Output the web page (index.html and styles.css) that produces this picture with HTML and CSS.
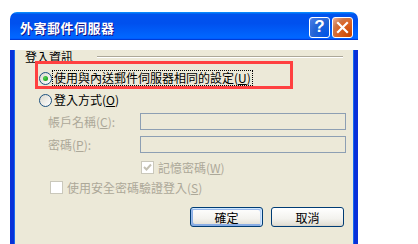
FILE: index.html
```html
<!DOCTYPE html>
<html lang="zh-Hant">
  <head>
    <meta charset="UTF-8" />
    <title>外寄郵件伺服器</title>
    <link rel="stylesheet" href="styles.css">
  </head>
  <body>
    <div class="window">
      <div class="titlebar">
        <span class="title">外寄郵件伺服器</span>
        <div class="controls">
          <span class="ctl help">?</span>
          <span class="ctl close">
            <svg width="13" height="13" viewBox="0 0 13 13">
              <path d="M2 2 L11 11 M11 2 L2 11" stroke="#fff" stroke-width="2.2" stroke-linecap="square" />
            </svg>
          </span>
        </div>
      </div>
      <div class="client">
        <div class="group-head">
          <span class="group-label">登入資訊</span>
          <span class="rule"></span>
        </div>
        <div class="row highlight">
          <span class="radio checked"></span>
          <span class="option focused">使用與內送郵件伺服器相同的設定(<u>U</u>)</span>
        </div>
        <div class="row second">
          <span class="radio"></span>
          <span class="option">登入方式(<u>O</u>)</span>
        </div>
        <div class="field first">
          <span class="field-label">帳戶名稱(<u>C</u>):</span>
          <span class="input"></span>
        </div>
        <div class="field">
          <span class="field-label">密碼(<u>P</u>):</span>
          <span class="input"></span>
        </div>
        <div class="check remember">
          <span class="box checked">
            <svg width="9" height="9" viewBox="0 0 9 9">
              <path d="M1 4 L3.5 6.5 L8 1.5" fill="none" stroke="#c4c1b3" stroke-width="2" />
            </svg>
          </span>
          <span class="dim">記憶密碼(<u>W</u>)</span>
        </div>
        <div class="check secure">
          <span class="box"></span>
          <span class="dim">使用安全密碼驗證登入(<u>S</u>)</span>
        </div>
        <div class="buttons">
          <button class="btn default">確定</button>
          <button class="btn">取消</button>
        </div>
      </div>
    </div>
  </body>
</html>
```

FILE: styles.css
```css
body {
  margin: 0;
  height: 244px;
  overflow: hidden;
  background-color: #fff;
  font-family: "Noto Sans CJK TC", "Liberation Sans", sans-serif;
  font-size: 12px;
  color: #000;
}
.window {
  width: 348px;
  margin: 12px 0 0 10px;
}
.titlebar {
  height: 28px;
  box-sizing: border-box;
  padding: 2px 5px 0 10px;
  display: flex;
  align-items: center;
  justify-content: space-between;
  border-radius: 7px 7px 0 0;
  background: linear-gradient(to bottom, #0997ff 0%, #0053ee 8%, #0050ee 40%, #0066ff 88%, #0066ff 93%, #005bff 95%, #003dd7 96%, #003dd7 100%);
}
.title {
  color: #fff;
  font-weight: bold;
  font-size: 13px;
  text-shadow: 1px 1px #0f1089;
  letter-spacing: 0.5px;
}
.controls {
  display: flex;
  gap: 2px;
}
.ctl {
  width: 21px;
  height: 21px;
  box-sizing: border-box;
  border: 1px solid #fff;
  border-radius: 3px;
  display: flex;
  align-items: center;
  justify-content: center;
  color: #fff;
}
.help {
  background: radial-gradient(circle at 90% 90%, #0054e9 0%, #2263d5 55%, #4479e4 90%, #a5c0f5 100%);
  font-family: "Liberation Sans", sans-serif;
  font-weight: bold;
  font-size: 17px;
}
.close {
  background: radial-gradient(circle at 90% 90%, #cc4600 0%, #dc6527 55%, #cd7546 70%, #f4b39a 100%);
}
.client {
  height: 195px;
  border: 4px solid #0831d9;
  border-top: 0;
  border-bottom-width: 5px;
  background-color: #ece9d8;
  box-shadow: inset 1px 0 #166aee, inset -1px 0 #166aee, inset 0 -1px #166aee;
}
.group-head {
  margin-top: 10px;
  height: 14px;
  padding: 0 11px;
  display: flex;
  align-items: center;
}
.group-label {
  line-height: 14px;
}
.rule {
  flex: 1;
  margin-left: 24px;
  height: 0;
  border-top: 1px solid #aca899;
  border-bottom: 1px solid #fff;
}
.row {
  display: flex;
  align-items: center;
}
.highlight {
  width: 252px;
  height: 22px;
  box-sizing: border-box;
  margin-left: 24px;
  padding: 6px 0 0 1px;
  outline: 3px solid #ff4040;
}
.second {
  height: 16px;
  margin: 6px 0 0 25px;
}
.radio {
  width: 13px;
  height: 13px;
  box-sizing: border-box;
  border: 1px solid #1c5180;
  border-radius: 50%;
  background: linear-gradient(135deg, #dcd9cf, #fff);
  position: relative;
}
.radio.checked::after {
  content: "";
  position: absolute;
  left: 3px;
  top: 3px;
  width: 5px;
  height: 5px;
  border-radius: 50%;
  background: radial-gradient(circle at 35% 35%, #55d551, #21a121 70%, #1a8a1a);
}
.option {
  margin-left: 1px;
  line-height: 14px;
  padding: 0 1px;
}
.focused {
  outline: 1px dotted #000;
}
.field {
  height: 17px;
  margin: 6px 0 0 34px;
  display: flex;
  align-items: center;
}
.field.first {
  margin-top: 5px;
}
.field-label {
  width: 92px;
  color: #aca899;
}
.input {
  width: 206px;
  height: 17px;
  box-sizing: border-box;
  border: 1px solid #8d9fb3;
  background-color: #ece9d8;
}
.check {
  height: 13px;
  display: flex;
  align-items: center;
  gap: 4px;
}
.remember {
  margin: 8px 0 0 127px;
}
.secure {
  margin: 7px 0 0 36px;
}
.box {
  width: 13px;
  height: 13px;
  box-sizing: border-box;
  border: 1px solid #cac8bb;
  background-color: #fff;
  display: flex;
  align-items: center;
  justify-content: center;
}
.dim {
  color: #aca899;
  line-height: 14px;
}
.buttons {
  margin-top: 13px;
  padding-right: 10px;
  display: flex;
  justify-content: flex-end;
  gap: 8px;
}
.btn {
  width: 73px;
  height: 20px;
  padding: 0;
  border: 1px solid #003c74;
  border-radius: 3px;
  background: linear-gradient(to bottom, #fff, #f3f2ee 60%, #e3e0d6 92%, #d6d0c5);
  font-family: inherit;
  font-size: 12px;
  color: #000;
}
.btn.default {
  box-shadow: inset -1px 1px #cee7ff, inset 1px 2px #98b8ea, inset -2px 2px #bcd4f6, inset 1px -1px #89ade4, inset 2px -2px #89ade4;
}
```
